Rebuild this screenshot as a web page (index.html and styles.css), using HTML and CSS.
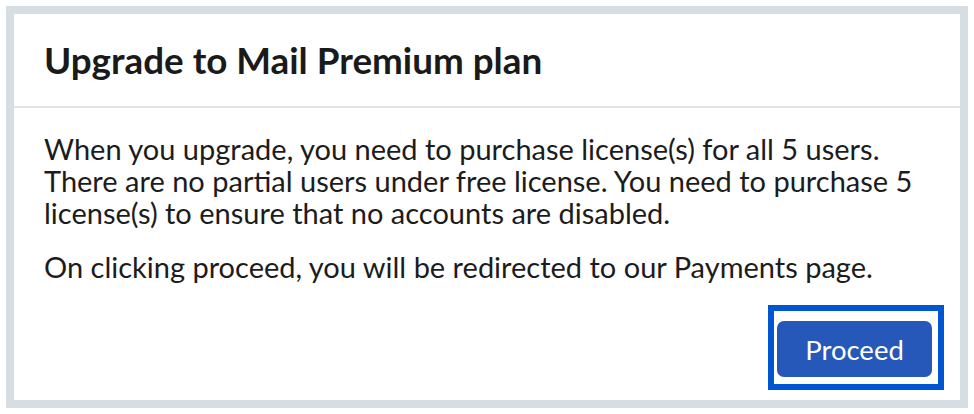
FILE: index.html
```html
<!DOCTYPE html>
<html>
<head>
<meta charset="utf-8">
<link rel="stylesheet" href="styles.css">
</head>
<body>
<div class="dialog">
  <div class="dialog-header">
    <h1 class="dialog-title">Upgrade to Mail Premium plan</h1>
  </div>
  <div class="dialog-body">
    <p class="para">When you upgrade, you need to purchase license(s) for all 5 users. There are no partial users under free license. You need to purchase 5 license(s) to ensure that no accounts are disabled.</p>
    <p class="para">On clicking proceed, you will be redirected to our Payments page.</p>
  </div>
  <div class="dialog-footer">
    <div class="focus-ring">
      <button class="btn-primary">Proceed</button>
    </div>
  </div>
</div>
</body>
</html>
```
FILE: styles.css
```css
html, body {
  margin: 0;
  padding: 0;
  background: #ffffff;
}
body {
  font-family: Lato, "Open Sans", sans-serif;
  color: #1c1c1c;
}
.dialog {
  margin: 6px;
  width: 946px;
  height: 386px;
  border: 8px solid #d6dee4;
  background: #ffffff;
  display: flex;
  flex-direction: column;
}
.dialog-header {
  flex-shrink: 0;
  height: 92px;
  border-bottom: 2px solid #e4e4e4;
  padding: 0 30px;
  display: flex;
  align-items: center;
}
.dialog-title {
  margin: 0;
  font-size: 36.8px;
  font-weight: 700;
  color: #1a1a1a;
}
.dialog-body {
  flex-shrink: 0;
  padding: 25px 30px 0;
}
.para {
  margin: 0;
  font-size: 29px;
  line-height: 32px;
}
.para + .para {
  margin-top: 22px;
}
.dialog-footer {
  flex: 1;
  display: flex;
  justify-content: flex-end;
  align-items: flex-end;
  padding: 0 16px 10px;
}
.focus-ring {
  border: 6px solid #0055d0;
  padding: 10px 6px 7px 3px;
  display: flex;
}
.btn-primary {
  width: 155px;
  height: 56px;
  border: none;
  border-radius: 7px;
  background: #2658b9;
  color: #ffffff;
  font-family: Lato, "Open Sans", sans-serif;
  font-size: 27.5px;
  padding: 0;
}
```
